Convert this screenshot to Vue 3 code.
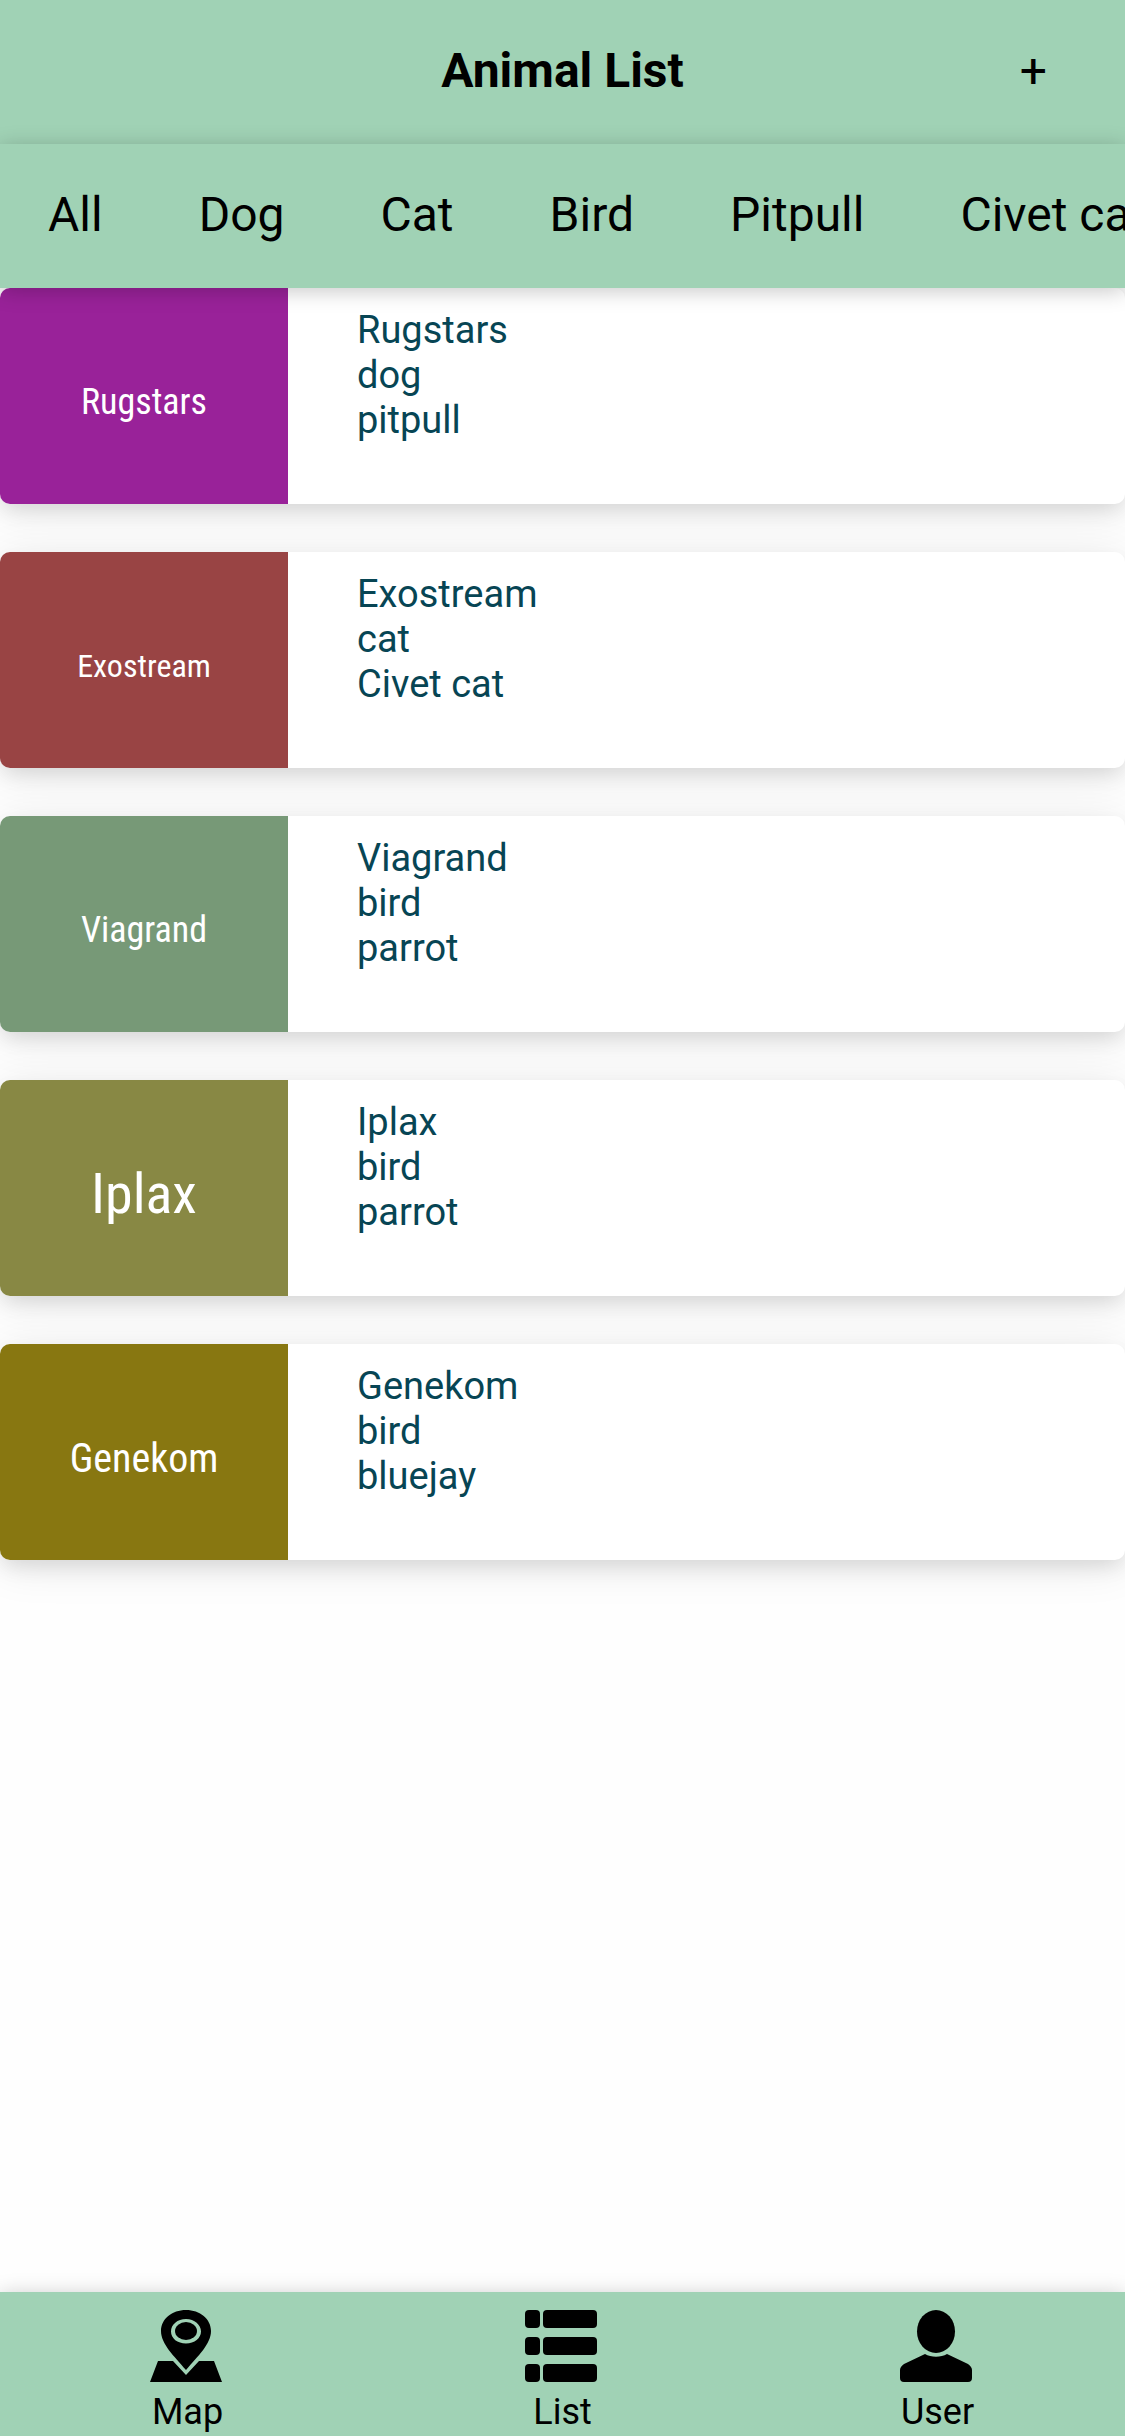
<script setup>
const filters = ['All', 'Dog', 'Cat', 'Bird', 'Pitpull', 'Civet cat']

const animals = [
  { name: 'Rugstars', type: 'dog', breed: 'pitpull', color: '#992299', size: 36 },
  { name: 'Exostream', type: 'cat', breed: 'Civet cat', color: '#994444', size: 32 },
  { name: 'Viagrand', type: 'bird', breed: 'parrot', color: '#779977', size: 36 },
  { name: 'Iplax', type: 'bird', breed: 'parrot', color: '#888844', size: 56 },
  { name: 'Genekom', type: 'bird', breed: 'bluejay', color: '#887711', size: 40 },
]
</script>

<template>
  <div class="screen">
    <header class="header">
      <h1 class="title">Animal List</h1>
      <button class="add" type="button" aria-label="Add animal">+</button>
    </header>

    <div class="filters">
      <button v-for="filter in filters" :key="filter" class="filter" type="button">{{ filter }}</button>
    </div>

    <main class="list">
      <article v-for="animal in animals" :key="animal.name" class="card">
        <div class="thumb" :style="{ backgroundColor: animal.color, fontSize: animal.size + 'px' }">
          {{ animal.name }}
        </div>
        <div class="details">
          <p>{{ animal.name }}</p>
          <p>{{ animal.type }}</p>
          <p>{{ animal.breed }}</p>
        </div>
      </article>
    </main>

    <nav class="nav">
      <a class="nav-item" href="#map">
        <svg class="icon" viewBox="0 0 72 72" aria-hidden="true">
          <path d="M8 51H23L36 65L49 51H64L72 72H0Z" />
          <path fill-rule="evenodd" d="M36 0C50 0 61 9 61 21C61 34 48 46 36 60C24 46 11 34 11 21C11 9 22 0 36 0ZM36 9C27.500 9 21 14.500 21 21.500S27.500 33.500 36 33.500S51 28 51 21.500S44.500 9 36 9Z" />
          <ellipse cx="36" cy="21" rx="11" ry="9" />
        </svg>
        <span>Map</span>
      </a>
      <a class="nav-item" href="#list">
        <svg class="icon" viewBox="0 0 72 72" aria-hidden="true">
          <rect width="15" height="18" rx="4" />
          <rect x="18" width="54" height="18" rx="4" />
          <rect y="27" width="15" height="18" rx="4" />
          <rect x="18" y="27" width="54" height="18" rx="4" />
          <rect y="54" width="15" height="18" rx="4" />
          <rect x="18" y="54" width="54" height="18" rx="4" />
        </svg>
        <span>List</span>
      </a>
      <a class="nav-item" href="#user">
        <svg class="icon" viewBox="0 0 72 72" aria-hidden="true">
          <ellipse cx="36" cy="21.500" rx="19" ry="21.500" />
          <path d="M25 44C31 47.500 41 47.500 47 44L68 54Q72 57 72 60V68Q72 72 68 72H4Q0 72 0 68V60Q0 57 4 54Z" />
        </svg>
        <span>User</span>
      </a>
    </nav>
  </div>
</template>

<style>
body {
  margin: 0;
  background: #fefefe;
}
</style>

<style scoped>
.screen {
  display: flex;
  flex-direction: column;
  min-height: 100vh;
  overflow-x: hidden;
  font-family: Roboto, sans-serif;
  color: #000;
}

button {
  padding: 0;
  border: 0;
  background: none;
  color: inherit;
  font: inherit;
  white-space: nowrap;
}

.header {
  box-sizing: border-box;
  display: grid;
  grid-template-columns: 1fr auto 1fr;
  align-items: center;
  height: 144px;
  padding: 0 78px 2px;
  background: #a0d2b5;
  font-size: 48px;
  line-height: 56px;
}

.title {
  grid-column: 2;
  margin: 0;
  font-size: inherit;
  font-weight: 700;
}

.add {
  justify-self: end;
}

.filters {
  position: relative;
  z-index: 1;
  box-sizing: border-box;
  display: flex;
  gap: 96px;
  align-items: center;
  height: 144px;
  padding: 0 48px 2px;
  background: #a0d2b5;
  box-shadow: 0 3px 20px rgba(0, 0, 0, 0.22);
  font-size: 48px;
  line-height: 56px;
}

.list {
  display: flex;
  flex: 1;
  flex-direction: column;
  gap: 48px;
  padding-bottom: 48px;
}

.card {
  display: flex;
  min-height: 216px;
  border-radius: 10px;
  background: #fff;
  box-shadow: 0 9px 20px -3px rgba(0, 0, 0, 0.1), 0 6px 44px rgba(0, 0, 0, 0.1);
}

.thumb {
  box-sizing: border-box;
  display: flex;
  flex: none;
  align-items: center;
  justify-content: center;
  width: 288px;
  padding-top: 12px;
  border-radius: 10px 0 0 10px;
  color: #fff;
  font-family: "Liberation Sans Narrow", "Roboto Condensed", "Liberation Sans", sans-serif;
}

.details {
  padding: 20px 24px 0 69px;
  color: #074554;
  font-size: 38px;
  line-height: 45px;
}

.details p {
  margin: 0;
}

.nav {
  position: relative;
  z-index: 1;
  display: flex;
  height: 144px;
  background: #a0d2b5;
  box-shadow: 0 3px 20px rgba(0, 0, 0, 0.22);
}

.nav-item {
  display: flex;
  flex: 1;
  flex-direction: column;
  align-items: center;
  padding-top: 18px;
  color: inherit;
  font-size: 36px;
  line-height: 42px;
  text-decoration: none;
}

.icon {
  width: 72px;
  height: 72px;
  margin-right: 3px;
  margin-bottom: 9px;
}
</style>
